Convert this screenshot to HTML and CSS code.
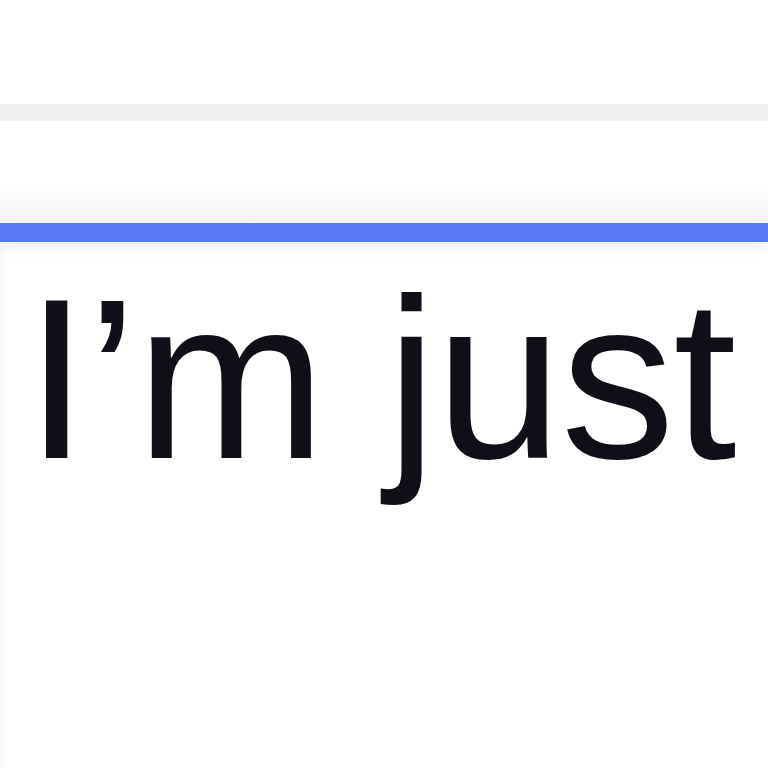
FILE: index.html
```html
<!DOCTYPE html>
<html lang="en">
<head>
  <meta charset="UTF-8">
  <meta name="viewport" content="width=device-width, initial-scale=1">
  <title>Editor</title>
  <link rel="stylesheet" href="styles.css">
</head>
<body>
  <div class="app">
    <div class="top-bar"></div>
    <div class="divider"></div>
    <div class="toolbar"></div>
    <div class="accent-line"></div>
    <div class="page">
      <p class="headline">I’m just</p>
    </div>
  </div>
</body>
</html>
```

FILE: styles.css
```css
body {
  margin: 0;
  padding: 0;
  background: #fff;
  font-family: 'Liberation Sans', Arial, sans-serif;
  overflow: hidden;
}
.app {
  width: 768px;
  height: 768px;
  display: flex;
  flex-direction: column;
}
.top-bar {
  height: 104px;
  background: #fff;
}
.divider {
  height: 17px;
  background: #eeeff1;
}
.toolbar {
  height: 102px;
  background: linear-gradient(180deg, #fff 0%, #fff 62%, #f4f4f5 100%);
}
.accent-line {
  height: 19px;
  background: #5878f4;
  position: relative;
  z-index: 1;
  box-shadow: 0 6px 14px rgba(0, 0, 0, 0.07);
}
.page {
  flex: 1;
  background: #fff;
  box-shadow: inset 10px 0 8px -6px rgba(0, 0, 0, 0.03);
  padding: 23px 0 0 25px;
}
.headline {
  margin: 0;
  font-size: 228px;
  line-height: 1;
  letter-spacing: -1.5px;
  color: #0f0f18;
  white-space: nowrap;
}
```
